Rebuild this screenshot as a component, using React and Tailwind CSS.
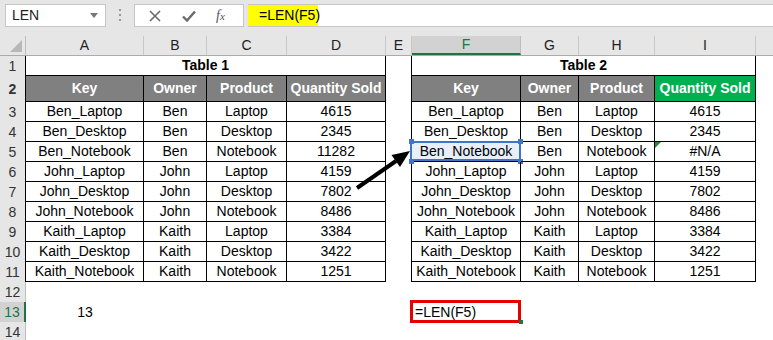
import React from 'react'

const COLS = [118, 63, 80, 99, 26, 109, 58, 76, 101]
const LETTERS = ['A', 'B', 'C', 'D', 'E', 'F', 'G', 'H', 'I']

const DATA = [
  ['Ben_Laptop', 'Ben', 'Laptop', '4615'],
  ['Ben_Desktop', 'Ben', 'Desktop', '2345'],
  ['Ben_Notebook', 'Ben', 'Notebook', '11282'],
  ['John_Laptop', 'John', 'Laptop', '4159'],
  ['John_Desktop', 'John', 'Desktop', '7802'],
  ['John_Notebook', 'John', 'Notebook', '8486'],
  ['Kaith_Laptop', 'Kaith', 'Laptop', '3384'],
  ['Kaith_Desktop', 'Kaith', 'Desktop', '3422'],
  ['Kaith_Notebook', 'Kaith', 'Notebook', '1251'],
]

function RowHead({ n, table, active }) {
  let cls = 'border-r border-[#bdbdbd] bg-[#e6e6e6] text-[#333]'
  if (table) cls = 'border-r border-black bg-[#e6e6e6] text-[#333]'
  if (active) cls = 'border-r-2 border-[#217346] bg-[#d2d2d2] text-[#217346]'
  return (
    <div className={`w-[26px] shrink-0 flex items-center justify-center text-[14px] ${cls}`}>
      {n}
    </div>
  )
}

function TopBar() {
  return (
    <div className="h-[36px] bg-[#e6e6e6] relative flex items-start pt-[4px]">
      <div className="ml-[5px] w-[101px] h-[23px] bg-white border border-[#c6c6c6] flex items-center justify-between pl-[6px] pr-[7px]">
        <span className="text-[14px] text-[#222]">LEN</span>
        <svg width="8" height="5" viewBox="0 0 8 5"><path d="M0 0h8L4 5z" fill="#777" /></svg>
      </div>
      <div className="ml-[13px] mt-[5px] flex flex-col gap-[3px]">
        <div className="w-[2px] h-[2px] bg-[#9a9a9a]" />
        <div className="w-[2px] h-[2px] bg-[#9a9a9a]" />
        <div className="w-[2px] h-[2px] bg-[#9a9a9a]" />
      </div>
      <div className="ml-[13px] w-[110px] h-[23px] bg-white border border-[#c6c6c6] flex items-center">
        <svg className="ml-[14px]" width="12" height="12" viewBox="0 0 12 12">
          <path d="M1 1L11 11M11 1L1 11" stroke="#6a6a6a" strokeWidth="1.6" />
        </svg>
        <svg className="ml-[21px]" width="14" height="12" viewBox="0 0 14 12">
          <path d="M1 6.5L5 10.5L13 1.5" stroke="#6a6a6a" strokeWidth="2.4" fill="none" />
        </svg>
        <span className="ml-[20px] text-[14px] italic text-[#555] font-['Liberation_Serif',serif]">
          f<span className="text-[11px]">x</span>
        </span>
      </div>
      <div className="ml-[4px] flex-1 h-[23px] bg-white border-y border-[#c6c6c6] flex">
        <div className="w-[70px] h-full bg-[#ffff00] flex items-center pl-[11px] text-[14px] text-black">
          =LEN(F5)
        </div>
      </div>
    </div>
  )
}

function ColHeader() {
  return (
    <div className="h-[20px] flex bg-[#e6e6e6] border-b border-[#ababab] text-[14px] text-[#222]">
      <div className="w-[26px] shrink-0 border-r border-[#bdbdbd] relative">
        <svg className="absolute right-[3px] bottom-[3px]" width="12" height="12" viewBox="0 0 12 12">
          <path d="M12 0V12H0z" fill="#b7b7b7" />
        </svg>
      </div>
      {COLS.map((w, i) => {
        const active = LETTERS[i] === 'F'
        return (
          <div
            key={i}
            style={{ width: w }}
            className={`shrink-0 flex items-center justify-center ${
              active
                ? 'bg-[#d2d2d2] text-[#217346] border-b-2 border-[#217346] border-r border-r-[#bdbdbd]'
                : 'border-r border-[#c8c8c8]'
            }`}
          >
            {LETTERS[i]}
          </div>
        )
      })}
      <div className="flex-1" />
    </div>
  )
}

function Cell({ w, children, cls = '' }) {
  return (
    <div style={{ width: w }} className={`shrink-0 flex items-center justify-center whitespace-nowrap ${cls}`}>
      {children}
    </div>
  )
}

export default function App() {
  const tb = 'border-r border-b border-black'
  return (
    <div className="w-[773px] h-[340px] overflow-hidden bg-white font-['Liberation_Sans',Arial,sans-serif] relative">
      <TopBar />
      <ColHeader />

      {/* row 1 */}
      <div className="h-[20px] flex">
        <RowHead n={1} table />
        <div className="w-[360px] shrink-0 border-r border-b border-black flex items-center justify-center text-[14px] font-bold">
          Table 1
        </div>
        <div className="w-[26px] shrink-0 border-r border-black" />
        <div className="w-[344px] shrink-0 border-r border-b border-black flex items-center justify-center text-[14px] font-bold">
          Table 2
        </div>
      </div>

      {/* row 2 */}
      <div className="h-[26px] flex text-[14px] font-bold text-white">
        <RowHead n={2} table />
        {['Key', 'Owner', 'Product', 'Quantity Sold'].map((t, i) => (
          <Cell key={i} w={COLS[i]} cls={`${tb} bg-[#808080]`}>{t}</Cell>
        ))}
        <Cell w={26} cls="border-r border-black" />
        {['Key', 'Owner', 'Product', 'Quantity Sold'].map((t, i) => (
          <Cell key={i} w={COLS[i + 5]} cls={`${tb} ${i === 3 ? 'bg-[#00b050]' : 'bg-[#808080]'}`}>{t}</Cell>
        ))}
      </div>

      {DATA.map((r, ri) => (
        <div key={ri} className="h-[20px] flex text-[14px] text-black">
          <RowHead n={ri + 3} table />
          {r.map((t, i) => (
            <Cell key={i} w={COLS[i]} cls={tb}>{t}</Cell>
          ))}
          <Cell w={26} cls="border-r border-black" />
          {r.map((t, i) => {
            const sel = ri === 2 && i === 0
            const na = ri === 2 && i === 3
            return (
              <Cell key={i} w={COLS[i + 5]} cls={`${tb} relative ${sel ? 'bg-[#e8eff9]' : ''}`}>
                {na ? '#N/A' : t}
                {na && (
                  <svg className="absolute left-0 top-0" width="6" height="6" viewBox="0 0 6 6">
                    <path d="M0 0H6L0 6z" fill="#1e8c3a" />
                  </svg>
                )}
                {sel && (
                  <>
                    <div className="absolute left-[-2px] top-[-1px] right-[-1px] bottom-0 border-2 border-[#3f75c8]" />
                    <div className="absolute left-[-3px] top-[-3px] w-[5px] h-[5px] bg-[#3f75c8]" />
                    <div className="absolute right-[-3px] top-[-3px] w-[5px] h-[5px] bg-[#3f75c8]" />
                    <div className="absolute left-[-3px] bottom-[-3px] w-[5px] h-[5px] bg-[#3f75c8]" />
                    <div className="absolute right-[-3px] bottom-[-3px] w-[5px] h-[5px] bg-[#3f75c8]" />
                  </>
                )}
              </Cell>
            )
          })}
        </div>
      ))}

      {/* row 12 */}
      <div className="h-[20px] flex">
        <RowHead n={12} />
      </div>

      {/* row 13 */}
      <div className="h-[20px] flex text-[14px] text-black">
        <RowHead n={13} active />
        <Cell w={118}>13</Cell>
        <div className="w-[242px] shrink-0" />
        <div className="w-[26px] shrink-0" />
        <div className="w-[109px] shrink-0 relative flex items-center pl-[3px]">
          =LEN(F5)
          <div className="absolute left-[-2px] top-[-2px] right-0 bottom-[-1px] border-[3px] border-[#e60000]" />
          <div className="absolute right-[-2px] bottom-[-2px] w-[4px] h-[4px] bg-[#217346]" />
        </div>
      </div>

      {/* row 14 */}
      <div className="h-[20px] flex">
        <RowHead n={14} />
      </div>

      {/* arrow overlay */}
      <svg className="absolute left-0 top-0 pointer-events-none" width="773" height="340">
        <line x1="357" y1="188" x2="396" y2="161" stroke="#000" strokeWidth="4" />
        <path d="M410 151L400 167L391.5 155z" fill="#000" />
      </svg>
    </div>
  )
}
